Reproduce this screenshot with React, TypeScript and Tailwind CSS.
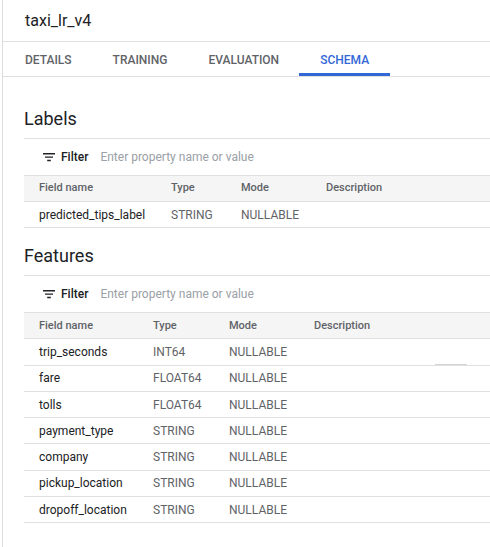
type Field = { name: string; type: string; mode: string };

const labels: Field[] = [{ name: "predicted_tips_label", type: "STRING", mode: "NULLABLE" }];

const features: Field[] = [
  { name: "trip_seconds", type: "INT64", mode: "NULLABLE" },
  { name: "fare", type: "FLOAT64", mode: "NULLABLE" },
  { name: "tolls", type: "FLOAT64", mode: "NULLABLE" },
  { name: "payment_type", type: "STRING", mode: "NULLABLE" },
  { name: "company", type: "STRING", mode: "NULLABLE" },
  { name: "pickup_location", type: "STRING", mode: "NULLABLE" },
  { name: "dropoff_location", type: "STRING", mode: "NULLABLE" },
];

const tabs = ["DETAILS", "TRAINING", "EVALUATION", "SCHEMA"];

function FilterIcon() {
  return (
    <svg width="12" height="10" viewBox="0 0 12 10" className="text-[#202124]">
      <path d="M0 1h12v1.4H0zM2 4.4h8v1.4H2zM4.2 7.8h3.6v1.4H4.2z" fill="currentColor" />
    </svg>
  );
}

function SchemaTable({ title, rows, cols }: { title: string; rows: Field[]; cols: [string, string] }) {
  return (
    <section className="flex flex-col">
      <h2 className="h-[42px] flex items-center text-[18px] text-[#202124] pt-[2px]">{title}</h2>
      <div className="border-t border-[#e0e0e0] h-[37px] flex items-center pl-[19px]">
        <FilterIcon />
        <span className="ml-[6px] text-[12px] font-medium text-[#202124]">Filter</span>
        <span className="ml-[12px] text-[12px] text-[#9aa0a6]">Enter property name or value</span>
      </div>
      <div className="h-[27px] flex items-center bg-[#f5f5f5] border-t border-b border-[#e0e0e0] text-[11px] font-medium text-[#5f6368] pl-[15px]">
        <span className={cols[0]}>Field name</span>
        <span className={cols[1]}>Type</span>
        <span className="w-[85px] shrink-0">Mode</span>
        <span>Description</span>
      </div>
      {rows.map((r, i) => (
        <div key={r.name} className="relative h-[26.3px] flex items-center border-b border-[#e0e0e0] text-[12px] pl-[15px]">
          <span className={`text-[#202124] ${cols[0]}`}>{r.name}</span>
          <span className={`text-[#5f6368] ${cols[1]}`}>{r.type}</span>
          <span className="text-[#5f6368]">{r.mode}</span>
          {title === "Features" && i === 0 && (
            <span className="absolute left-[411px] bottom-0 w-[32px] h-[1px] bg-[#d4d4d4]" />
          )}
        </div>
      ))}
    </section>
  );
}

export default function App() {
  return (
    <div className="min-h-[547px] w-[490px] bg-white border-l border-[#dadce0] ml-[2px] font-['Roboto',sans-serif] overflow-hidden">
      <header className="h-[42px] flex items-center pl-[22px] border-b border-[#e0e0e0]">
        <h1 className="text-[16px] text-[#202124]">taxi_lr_v4</h1>
      </header>
      <nav className="h-[35px] flex items-stretch border-b border-[#e0e0e0] pl-[22px]">
        {tabs.map((t) => {
          const active = t === "SCHEMA";
          return (
            <div
              key={t}
              className={`flex items-center text-[12px] font-medium ${
                active
                  ? "text-[#3367d6] border-b-[3px] border-[#3367d6] px-[21px] -ml-[21px] pt-[5px]"
                  : "text-[#5f6368] mr-[41px] pt-[2px]"
              }`}
            >
              {t}
            </div>
          );
        })}
      </nav>
      <div className="pl-[21px] pt-[19px] flex flex-col gap-[5px]">
        <SchemaTable title="Labels" rows={labels} cols={["w-[132px] shrink-0", "w-[70px] shrink-0"]} />
        <SchemaTable title="Features" rows={features} cols={["w-[114px] shrink-0", "w-[76px] shrink-0"]} />
      </div>
    </div>
  );
}
